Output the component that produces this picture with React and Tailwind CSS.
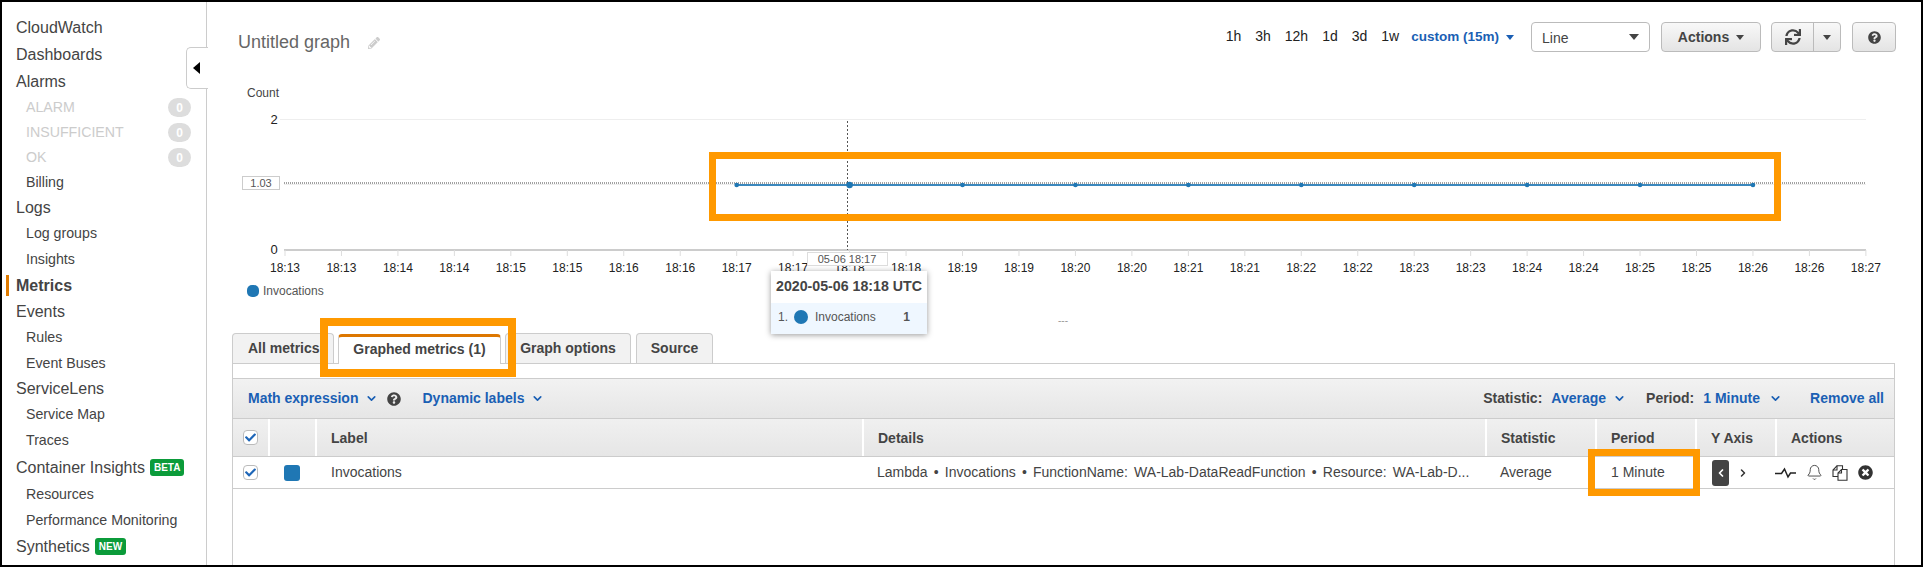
import React from "react";
import { FaSync, FaQuestionCircle, FaPencilAlt, FaCheck, FaTimesCircle } from "react-icons/fa";
import { ChevronDown, ChevronLeft, ChevronRight, Bell } from "lucide-react";

const nav = [
  { label: "CloudWatch", h: "h-[27px]" },
  { label: "Dashboards", h: "h-[27px]" },
  { label: "Alarms", h: "h-[27px]" },
  { label: "ALARM", sub: true, muted: true, h: "h-[25px]", count: 0 },
  { label: "INSUFFICIENT", sub: true, muted: true, h: "h-[25px]", count: 0 },
  { label: "OK", sub: true, muted: true, h: "h-[25px]", count: 0 },
  { label: "Billing", sub: true, h: "h-[25px]" },
  { label: "Logs", h: "h-[26px]" },
  { label: "Log groups", sub: true, h: "h-[26px]" },
  { label: "Insights", sub: true, h: "h-[25px]" },
  { label: "Metrics", active: true, h: "h-[27px]" },
  { label: "Events", h: "h-[26px]" },
  { label: "Rules", sub: true, h: "h-[26px]" },
  { label: "Event Buses", sub: true, h: "h-[25px]" },
  { label: "ServiceLens", h: "h-[26px]" },
  { label: "Service Map", sub: true, h: "h-[26px]" },
  { label: "Traces", sub: true, h: "h-[25px]" },
  { label: "Container Insights", h: "h-[29px]", tag: "BETA" },
  { label: "Resources", sub: true, h: "h-[26px]" },
  { label: "Performance Monitoring", sub: true, h: "h-[25px]" },
  { label: "Synthetics", h: "h-[27px]", tag: "NEW" },
];

const times = ["1h", "3h", "12h", "1d", "3d", "1w"];
const axisLabels = ["18:13", "18:13", "18:14", "18:14", "18:15", "18:15", "18:16", "18:16", "18:17", "18:17", "18:18", "18:18", "18:19", "18:19", "18:20", "18:20", "18:21", "18:21", "18:22", "18:22", "18:23", "18:23", "18:24", "18:24", "18:25", "18:25", "18:26", "18:26", "18:27"];
const tickX = (i) => 285 + i * 56.46;

const Caret = ({ color = "border-t-[#444]" }) => (
  <span className={`inline-block w-0 h-0 border-x-[4px] border-t-[5px] border-x-transparent ${color}`} />
);

const Checkbox = () => (
  <span className="flex w-[15px] h-[15px] items-center justify-center rounded-[4px] border border-[#bbb] bg-white">
    <FaCheck className="text-[#1e66b8] text-[11px]" />
  </span>
);

const LinkMenu = ({ children }) => (
  <span className="flex items-center gap-[7px] text-[#1a5fb4] font-bold text-[14px]">
    {children}
    <ChevronDown size={13} strokeWidth={3} />
  </span>
);

const Sidebar = () => (
  <div className="w-[205px] shrink-0 border-r border-[#ccc] pt-[12px] relative">
    {nav.map((item) => (
      <div key={item.label} className={`${item.h} flex items-center relative ${item.sub ? "pl-[24px] text-[14.2px]" : "pl-[14px] text-[16px]"} ${item.muted ? "text-[#ccc]" : "text-[#444]"} ${item.active ? "font-bold" : ""}`}>
        {item.active && <span className="absolute left-[4px] top-[3px] w-[3px] h-[21px] bg-[#e07b00]" />}
        {item.label}
        {item.count !== undefined && (
          <span className="absolute left-[166px] top-[3px] w-[23px] h-[19px] rounded-full bg-[#ddd] text-white text-[12px] font-bold flex items-center justify-center">{item.count}</span>
        )}
        {item.tag && (
          <span className="ml-[5px] h-[17px] px-[4px] rounded-[3px] bg-[#0b9b3a] text-white text-[10px] font-bold flex items-center">{item.tag}</span>
        )}
      </div>
    ))}
    <div className="absolute left-[184px] top-[45px] w-[22px] h-[42px] bg-white border border-r-0 border-[#ccc] rounded-l-[5px] flex items-center pl-[6px]">
      <span className="w-0 h-0 border-y-[6px] border-r-[7px] border-y-transparent border-r-black" />
    </div>
  </div>
);

const Header = () => (
  <div className="h-[78px] flex items-start pl-[31px] pr-[25px] pt-[20px]">
    <div className="flex items-center gap-[18px] mt-[7px] text-[#666] text-[18px]">
      Untitled graph
      <FaPencilAlt className="text-[#ccc] text-[12px]" />
    </div>
    <div className="ml-auto flex items-center">
      <div className="flex items-center gap-[14px] text-[14px] text-[#222] mt-[-1px]">
        {times.map((t) => <span key={t}>{t}</span>)}
      </div>
      <div className="flex items-center gap-[7px] ml-[12px] mr-[17px] text-[13.5px] font-bold text-[#1a5fb4]">
        custom (15m)
        <Caret color="border-t-[#1a5fb4]" />
      </div>
      <div className="w-[119px] h-[30px] rounded-[4px] border border-[#bbb] bg-white flex items-center justify-between pl-[10px] pr-[10px] text-[14px] text-[#444]">
        <span className="mt-[2px]">Line</span>
        <span className="w-0 h-0 border-x-[5px] border-t-[6px] border-x-transparent border-t-[#444]" />
      </div>
      <button className="ml-[11px] w-[100px] h-[30px] rounded-[4px] border border-[#bbb] bg-gradient-to-b from-[#f8f8f8] to-[#e4e4e4] flex items-center justify-center gap-[7px] text-[14px] font-bold text-[#444]">
        Actions
        <Caret />
      </button>
      <div className="ml-[10px] flex h-[30px] rounded-[4px] border border-[#bbb] bg-gradient-to-b from-[#f8f8f8] to-[#e4e4e4]">
        <span className="w-[42px] flex items-center justify-center border-r border-[#bbb] text-[#444]"><FaSync className="text-[16px]" /></span>
        <span className="w-[26px] flex items-center justify-center"><Caret /></span>
      </div>
      <button className="ml-[11px] w-[44px] h-[30px] rounded-[4px] border border-[#bbb] bg-gradient-to-b from-[#f8f8f8] to-[#e4e4e4] flex items-center justify-center text-[#444]">
        <FaQuestionCircle className="text-[13px]" />
      </button>
    </div>
  </div>
);

const Chart = () => (
  <svg viewBox="207 80 1714 253" className="block w-[1714px] h-[253px] font-['Liberation_Sans',sans-serif]">
    <text x="247" y="97" fontSize="12" fill="#444">Count</text>
    <text x="274" y="124" fontSize="13" fill="#222" textAnchor="middle">2</text>
    <text x="274" y="254" fontSize="13" fill="#222" textAnchor="middle">0</text>
    <line x1="280" x2="1866" y1="119.5" y2="119.5" stroke="#eee" />
    <line x1="284" x2="1866" y1="184.5" y2="184.5" stroke="#eee" />
    <line x1="284" x2="1866" y1="183" y2="183" stroke="#444" strokeDasharray="1 1" />
    <rect x="242.5" y="176.5" width="37" height="13" fill="#fff" stroke="#ccc" />
    <text x="261" y="187" fontSize="11" fill="#555" textAnchor="middle">1.03</text>
    <line x1="284" x2="1866" y1="250" y2="250" stroke="#ccc" strokeWidth="2" />
    {axisLabels.map((label, i) => (
      <g key={i}>
        <line x1={tickX(i)} x2={tickX(i)} y1="250" y2="256" stroke="#ddd" />
        <text x={tickX(i)} y="272" fontSize="12" fill="#222" textAnchor="middle">{label}</text>
      </g>
    ))}
    <line x1="847.5" x2="847.5" y1="121" y2="250" stroke="#555" strokeDasharray="2 2" />
    <line x1={tickX(8)} x2={tickX(26)} y1="185" y2="185" stroke="#3a87bd" strokeWidth="2" />
    {axisLabels.map((_, i) => (i >= 8 && i <= 26 && i % 2 === 0 ? (
      <circle key={i} cx={tickX(i)} cy="185" r={i === 10 ? 3.2 : 2.3} fill="#1f77b4" />
    ) : null))}
    <rect x="807.5" y="252.5" width="80" height="13" fill="#fff" stroke="#ddd" />
    <text x="847" y="263" fontSize="11" fill="#555" textAnchor="middle">05-06 18:17</text>
    <rect x="247" y="285" width="12" height="12" rx="5" fill="#1f77b4" />
    <text x="263" y="295" fontSize="12" fill="#555">Invocations</text>
    <text x="1063" y="324" fontSize="10" fill="#999" textAnchor="middle">---</text>
  </svg>
);

const Tabs = () => (
  <div className="flex items-end h-[30px] pl-[25px] gap-[4px] text-[14px] font-bold text-[#444]">
    <span className="w-[102px] h-[30px] rounded-t-[4px] border border-b-0 border-[#ccc] bg-[#f2f2f2] flex items-center pl-[15px]">All metrics</span>
    <span className="w-[163px] h-[30px] pb-[2px] rounded-t-[4px] border-x border-t-[3px] border-x-[#ccc] border-t-[#dd7700] bg-white flex items-center justify-center relative z-10 mb-[-1px]">Graphed metrics (1)</span>
    <span className="w-[126px] h-[30px] rounded-t-[4px] border border-b-0 border-[#ccc] bg-[#f2f2f2] flex items-center justify-center">Graph options</span>
    <span className="ml-[1px] w-[77px] h-[30px] rounded-t-[4px] border border-b-0 border-[#ccc] bg-[#f2f2f2] flex items-center justify-center">Source</span>
  </div>
);

const columns = "grid grid-cols-[35px_47px_547px_623px_110px_100px_80px_119px]";

const PulseIcon = () => (
  <svg width="22" height="12" viewBox="0 0 22 12" fill="none" stroke="#222" strokeWidth="1.5">
    <path d="M0 6.5h6.5l3-4.5 3.5 8 2.5-4H21" />
  </svg>
);

const CopyIcon = () => (
  <svg width="16" height="16" viewBox="0 0 16 16" fill="none" stroke="#333" strokeWidth="1.1">
    <path d="M6 11.5H1V5L5 .8H10.5V4.5" />
    <path d="M1 5H5V.8" />
    <path d="M6 15.2V8L9.5 4.5H15V15.2Z" />
    <path d="M6 8H9.5V4.5" />
  </svg>
);

const Panel = () => (
  <div className="flex-1 ml-[25px] mr-[26px] border-x border-t border-[#ccc] flex flex-col">
    <div className="h-[15px] shrink-0 border-b border-[#ccc]" />
    <div className="h-[40px] shrink-0 border-b border-[#ccc] bg-gradient-to-b from-[#f2f2f2] to-[#e6e6e6] flex items-center pl-[15px] pr-[10px] text-[14px]">
      <LinkMenu>Math expression</LinkMenu>
      <FaQuestionCircle className="ml-[9px] text-[#444] text-[14px]" />
      <span className="ml-[21px]"><LinkMenu>Dynamic labels</LinkMenu></span>
      <span className="ml-auto font-bold text-[#444]">Statistic:</span>
      <span className="ml-[9px]"><LinkMenu>Average</LinkMenu></span>
      <span className="ml-[20px] font-bold text-[#444]">Period:</span>
      <span className="ml-[9px]"><LinkMenu><span className="mr-[2px]">1 Minute</span></LinkMenu></span>
      <span className="ml-[28px] font-bold text-[#1a5fb4]">Remove all</span>
    </div>
    <div className={`${columns} h-[38px] shrink-0 border-b border-[#ccc] bg-gradient-to-b from-[#f0f0f0] to-[#e6e6e6] text-[14px] font-bold text-[#444]`}>
      <div className="flex items-center pl-[10px]"><Checkbox /></div>
      <div className="border-l-2 border-white" />
      <div className="border-l-2 border-white flex items-center pl-[14px] pt-[2px]">Label</div>
      <div className="border-l-2 border-white flex items-center pl-[14px] pt-[2px]">Details</div>
      <div className="border-l-2 border-white flex items-center pl-[14px] pt-[2px]">Statistic</div>
      <div className="border-l-2 border-white flex items-center pl-[14px] pt-[2px]">Period</div>
      <div className="border-l-2 border-white flex items-center pl-[14px] pt-[2px]">Y Axis</div>
      <div className="border-l-2 border-white flex items-center pl-[14px] pt-[2px]">Actions</div>
    </div>
    <div className={`${columns} h-[32px] shrink-0 border-b border-[#ccc] text-[14px] text-[#444]`}>
      <div className="flex items-center pl-[10px]"><Checkbox /></div>
      <div className="flex items-center pl-[16px]"><span className="w-[16px] h-[16px] rounded-[3px] bg-[#1f77b4]" /></div>
      <div className="flex items-center pl-[16px]">Invocations</div>
      <div className="flex items-center pl-[15px] whitespace-nowrap overflow-hidden [word-spacing:2.3px]">Lambda • Invocations • FunctionName: WA-Lab-DataReadFunction • Resource: WA-Lab-D...</div>
      <div className="flex items-center pl-[15px]">Average</div>
      <div className="flex items-center pl-[16px]">1 Minute</div>
      <div className="flex items-center pl-[17px] gap-[8px]">
        <span className="w-[17px] h-[26px] rounded-[3px] bg-[#444] text-white flex items-center justify-center"><ChevronLeft size={12} strokeWidth={3.5} /></span>
        <ChevronRight size={12} strokeWidth={3} className="text-[#333]" />
      </div>
      <div className="flex items-center gap-[9px]">
        <PulseIcon />
        <Bell size={17} strokeWidth={1.2} className="text-[#333]" />
        <CopyIcon />
        <FaTimesCircle className="text-[#333] text-[15px] ml-[1px]" />
      </div>
    </div>
  </div>
);

const Main = () => (
  <div className="flex-1 flex flex-col min-w-0">
    <Header />
    <Chart />
    <Tabs />
    <Panel />
  </div>
);

export default function App() {
  return (
    <div className="relative w-[1923px] h-[567px] border-2 border-black bg-white flex overflow-hidden font-['Liberation_Sans',sans-serif]">
      <Sidebar />
      <Main />
      {/* tooltip */}
      <div className="absolute left-[769px] top-[269px] w-[156px] h-[63px] bg-white shadow-[0_1px_6px_rgba(0,0,0,0.4)] z-10">
        <div className="h-[32px] flex items-center pl-[5px] text-[14.2px] font-bold text-[#444]">2020-05-06 18:18 UTC</div>
        <div className="h-[31px] pb-[3px] bg-[#eff7ff] flex items-center pl-[7px] text-[12px] text-[#555]">
          1.
          <span className="ml-[6px] w-[14px] h-[14px] rounded-full bg-[#1f77b4]" />
          <span className="ml-[7px]">Invocations</span>
          <span className="ml-auto mr-[17px] font-bold">1</span>
        </div>
      </div>
      {/* orange callouts */}
      <div className="absolute left-[707px] top-[150px] w-[1072px] h-[69px] border-[7px] border-[#ff9900] z-20" />
      <div className="absolute left-[318px] top-[316px] w-[196px] h-[59px] border-[8px] border-[#ff9900] z-20" />
      <div className="absolute left-[1586px] top-[447px] w-[112px] h-[47px] border-[7px] border-[#ff9900] z-20" />
    </div>
  );
}
